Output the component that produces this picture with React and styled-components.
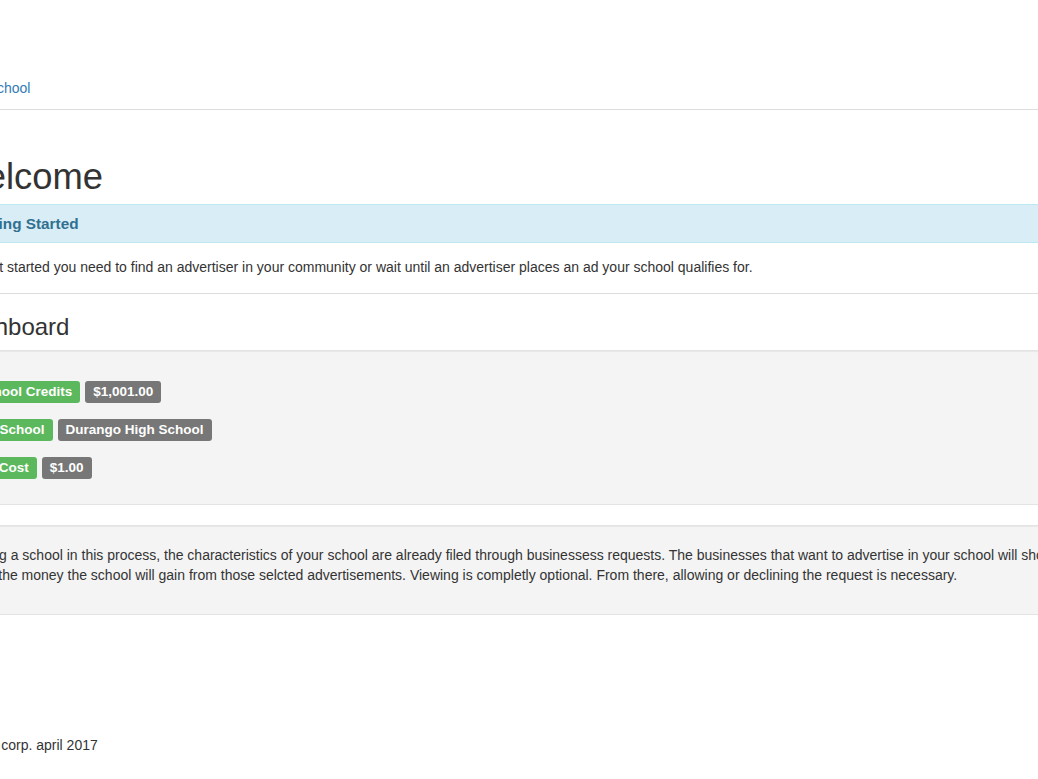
import styled, { createGlobalStyle } from "styled-components";

const GlobalStyle = createGlobalStyle`
  html, body {
    margin: 0;
    padding: 0;
    background: #fff;
  }
  body {
    font-family: "Liberation Sans", Arial, Helvetica, sans-serif;
    font-size: 14px;
    line-height: 1.42857;
    color: #333;
  }
`;

// the page is scrolled sideways in the reference, so the container
// starts off the left edge and runs past the right one
const Page = styled.div`
  width: 100%;
  height: 779px;
  overflow: hidden;
`;

const Container = styled.div`
  width: 1140px;
  margin-left: -48px;
`;

const Tabs = styled.nav`
  display: flex;
  padding-top: 67px;
  border-bottom: 1px solid #ddd;
`;

const TabLink = styled.a`
  display: block;
  padding: 11px 15px 11px 13px;
  line-height: 20px;
  color: #337ab7;
  text-decoration: none;
`;

const Content = styled.main`
  padding-top: 25px;
`;

const Title = styled.h1`
  margin: 22px 0 7px;
  font-size: 36.4px;
  font-weight: 500;
  line-height: 40px;
`;

const Panel = styled.section`
  margin-bottom: 20px;
`;

const PanelHeading = styled.div`
  padding: 10px 16px;
  background: #d9edf7;
  border-top: 1px solid #bce8f1;
  border-bottom: 1px solid #bce8f1;
  color: #31708f;
  font-size: 15.3px;
  font-weight: 700;
  line-height: 17px;
`;

const PanelBody = styled.div`
  padding: 15px 13px;
  border-bottom: 1px solid #ddd;
`;

const SubTitle = styled.h2`
  margin: 0 0 10px;
  font-size: 24px;
  font-weight: 500;
  line-height: 1.1;
`;

const Well = styled.div`
  padding: 20px 17px 19px 19px;
  margin-bottom: 20px;
  background: #f4f4f4;
  border-top: 1px solid #e3e3e3;
  border-bottom: 1px solid #e3e3e3;
  box-shadow: inset 0 1px 1px rgba(0, 0, 0, 0.05);

  p {
    margin: 0 0 9px;
  }
`;

const Stats = styled.div`
  display: flex;
  flex-direction: column;
  gap: 16px;
  margin: 10px 0 6px -2px;
`;

const StatRow = styled.div`
  display: flex;
  gap: 5px;
  height: 22px;
`;

const Label = styled.span`
  display: inline-block;
  padding: 4px 8px 4px;
  border-radius: 3px;
  background: ${(p) => (p.$tone === "success" ? "#5cb85c" : "#777")};
  color: #fff;
  font-size: 13.5px;
  font-weight: 700;
  line-height: 14px;
  white-space: nowrap;
`;

const Footer = styled.footer`
  padding-top: 100px;
  line-height: 20px;
`;

const stats = [
  { name: "School Credits", value: "$1,001.00" },
  { name: "My School", value: "Durango High School" },
  { name: "Ad Cost", value: "$1.00" },
];

const App = () => {
  return (
    <Page>
      <GlobalStyle />
      <Container>
        <Tabs>
          <TabLink href="#">My School</TabLink>
        </Tabs>
        <Content>
          <Title>Welcome</Title>
          <Panel>
            <PanelHeading>Getting Started</PanelHeading>
            <PanelBody>
              To get started you need to find an advertiser in your community or wait until an
              advertiser places an ad your school qualifies for.
            </PanelBody>
          </Panel>

          <SubTitle>Dashboard</SubTitle>
          <Well>
            <Stats>
              {stats.map((s) => (
                <StatRow key={s.name}>
                  <Label $tone="success">{s.name}</Label>
                  <Label>{s.value}</Label>
                </StatRow>
              ))}
            </Stats>
          </Well>

          <Well>
            <p>
              Being a school in this process, the characteristics of your school are already filed
              through businessess requests. The businesses that want to advertise in your school
              will show and the money the school will gain from those selcted advertisements.
              Viewing is completly optional. From there, allowing or declining the request is
              necessary.
            </p>
          </Well>
        </Content>
        <Footer>© Adco  corp. april 2017</Footer>
      </Container>
    </Page>
  );
};

export default App;
